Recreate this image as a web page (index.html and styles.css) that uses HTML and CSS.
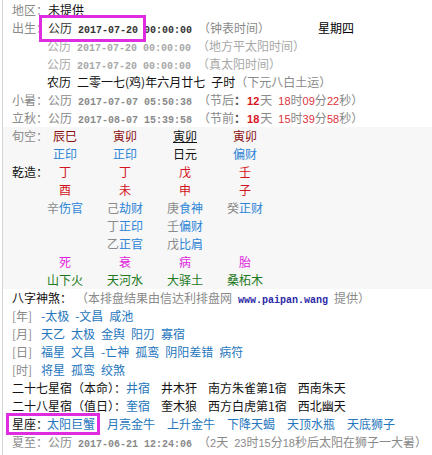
FILE: index.html
```html
<!DOCTYPE html>
<html lang="zh-CN">
<head>
<meta charset="utf-8">
<title>排盘</title>
<link rel="stylesheet" href="styles.css">
</head>
<body>
<div class="page">
  <div class="row"><span class="g lbl">地区：</span>未提供</div>
  <div class="row"><span class="g lbl">出生：</span><span class="dk">公历</span><span class="mono dk">&nbsp;2017-07-20&nbsp;00:00:00&nbsp;</span><span class="g">（钟表时间）</span><span class="week">星期四</span></div>
  <div class="row lt ind">公历<span class="mono">&nbsp;2017-07-20&nbsp;00:00:00&nbsp;</span>（地方平太阳时间）</div>
  <div class="row lt ind">公历<span class="mono">&nbsp;2017-07-20&nbsp;00:00:00&nbsp;</span>（真太阳时间）</div>
  <div class="row ind">农历<span class="sp"></span>二零一七(鸡)年六月廿七<span class="sp"></span>子时<span class="g">（下元八白土运）</span></div>
  <div class="row g"><span class="lbl">小暑：</span>公历<span class="mono">&nbsp;2017-07-07&nbsp;05:50:38&nbsp;</span>（节后<b class="colon">：</b><b class="rb">12</b>天<span class="sp"></span><span class="rn">18</span>时<span class="rn">09</span>分<span class="rn">22</span>秒）</div>
  <div class="row g"><span class="lbl">立秋：</span>公历<span class="mono">&nbsp;2017-08-07&nbsp;15:39:58&nbsp;</span>（节前<b class="colon">：</b><b class="rb">18</b>天<span class="sp"></span><span class="rn">15</span>时<span class="rn">39</span>分<span class="rn">58</span>秒）</div>

  <div class="tbl">
    <div class="trow"><span class="tl g">旬空：</span><div class="cells"><span class="dr">辰巳</span><span class="dr">寅卯</span><span class="ul">寅卯</span><span class="dr">寅卯</span></div></div>
    <div class="trow"><span class="tl"></span><div class="cells"><span class="bl">正印</span><span class="bl">正印</span><span>日元</span><span class="bl">偏财</span></div></div>
    <div class="trow"><span class="tl">乾造：</span><div class="cells"><span class="rd">丁</span><span class="rd">丁</span><span class="rd">戊</span><span class="rd">壬</span></div></div>
    <div class="trow"><span class="tl"></span><div class="cells"><span class="rd">酉</span><span class="rd">未</span><span class="rd">申</span><span class="rd">子</span></div></div>
    <div class="trow"><span class="tl"></span><div class="cells"><span><i class="g">辛</i><i class="bl">伤官</i></span><span><i class="g">己</i><i class="bl">劫财</i></span><span><i class="g">庚</i><i class="bl">食神</i></span><span><i class="g">癸</i><i class="bl">正财</i></span></div></div>
    <div class="trow"><span class="tl"></span><div class="cells"><span></span><span><i class="g">丁</i><i class="bl">正印</i></span><span><i class="g">壬</i><i class="bl">偏财</i></span><span></span></div></div>
    <div class="trow"><span class="tl"></span><div class="cells"><span></span><span><i class="g">乙</i><i class="bl">正官</i></span><span><i class="g">戊</i><i class="bl">比肩</i></span><span></span></div></div>
    <div class="trow"><span class="tl"></span><div class="cells"><span class="mg">死</span><span class="mg">衰</span><span class="mg">病</span><span class="mg">胎</span></div></div>
    <div class="trow"><span class="tl"></span><div class="cells"><span class="gn">山下火</span><span class="gn">天河水</span><span class="gn">大驿土</span><span class="gn">桑柘木</span></div></div>
  </div>

  <div class="row">八字神煞：<span class="g note">（本排盘结果由信达利排盘网<span class="sp"></span><span class="url">www.paipan.wang</span><span class="sp"></span>提供）</span></div>
  <div class="row ss"><span class="g sl">[年]</span><span class="items"><span>-太极</span><span>-文昌</span><span>咸池</span></span></div>
  <div class="row ss"><span class="g sl">[月]</span><span class="items"><span>天乙</span><span>太极</span><span>金舆</span><span>阳刃</span><span>寡宿</span></span></div>
  <div class="row ss"><span class="g sl">[日]</span><span class="items"><span>福星</span><span>文昌</span><span>-亡神</span><span>孤鸾</span><span>阴阳差错</span><span>病符</span></span></div>
  <div class="row ss"><span class="g sl">[时]</span><span class="items"><span>将星</span><span>孤鸾</span><span>绞煞</span></span></div>
  <div class="row xs">二十七星宿（本命）：<span class="bl2">井宿</span><span>井木犴</span><span>南方朱雀第1宿</span><span>西南朱天</span></div>
  <div class="row xs">二十八星宿（值日）：<span class="bl2">奎宿</span><span>奎木狼</span><span>西方白虎第1宿</span><span>西北幽天</span></div>
  <div class="row zodiac">星座：<span class="items"><span>太阳巨蟹</span><span>月亮金牛</span><span>上升金牛</span><span>下降天蝎</span><span>天顶水瓶</span><span>天底狮子</span></span></div>
  <div class="row g"><span class="lbl">夏至：</span>公历<span class="mono">&nbsp;2017-06-21&nbsp;12:24:06&nbsp;</span>（<span class="num">2</span>天<span class="sp"></span><span class="num">23</span>时<span class="num">15</span>分<span class="num">18</span>秒后太阳在狮子一大暑）</div>

  <div class="mark mark-birth"></div>
  <div class="mark mark-star"></div>
</div>
</body>
</html>
```
FILE: styles.css
```css
html, body {
  margin: 0;
  padding: 0;
  background: #ffffff;
}
body {
  font-family: "Noto Sans CJK SC", "Noto Sans", sans-serif;
  font-size: 12px;
  line-height: 18px;
  color: #111;
}
.page {
  position: relative;
  margin-left: 2px;
  border-left: 1px solid #d4d4d4;
  padding: 1px 0 0 9px;
  min-height: 454px;
}
.row {
  height: 18px;
  white-space: nowrap;
}
.lbl { display: inline-block; width: 36px; }
.ind { padding-left: 35px; }
.g { color: #8a8a8a; }
.lt { color: #a8a8a8; }
.dk { color: #333; }
.mono {
  font-family: "Liberation Mono", monospace;
  font-size: 10px;
  font-weight: bold;
}
.sp { display: inline-block; width: 6px; }
.week { margin-left: 48px; color: #000; }
.colon { font-weight: bold; color: #555; }
.rb {
  font-family: "Liberation Sans", sans-serif;
  font-size: 11px;
  font-weight: bold;
  color: #d8141c;
  margin: 0 1px;
}
.rn {
  font-family: "Liberation Sans", sans-serif;
  font-size: 11px;
  color: #e0303a;
}
.num {
  font-family: "Liberation Sans", sans-serif;
  font-size: 11px;
}

.tbl {
  background: #f7f7f7;
  margin-left: -9px;
  padding-left: 9px;
  margin-top: 0;
}
.trow {
  display: flex;
  height: 18px;
  white-space: nowrap;
}
.tl { width: 35px; flex: none; }
.cells {
  display: grid;
  grid-template-columns: repeat(4, 36px);
  column-gap: 24px;
}
.cells > span { text-align: center; white-space: nowrap; }
.cells i { font-style: normal; }
.dr { color: #8b0f0f; }
.ul { color: #111; text-decoration: underline; }
.bl { color: #2b84d6; }
.rd { color: #d31420; }
.mg { color: #e01ee0; }
.gn { color: #1c7a1c; }

.note { margin-left: 10px; }
.url {
  font-family: "Liberation Mono", monospace;
  font-size: 10px;
  font-weight: bold;
  color: #2a2aa8;
}
.ss { display: flex; }
.sl { width: 29px; flex: none; }
.items { display: inline-flex; gap: 6px; color: #2576bd; }
.xs > span { margin-left: 11px; }
.xs > span.bl2 { margin-left: 0; color: #2576bd; }
.zodiac { display: flex; }
.zodiac .items { gap: 12px; margin-left: -1px; }

.mark {
  position: absolute;
  border: 3px solid #e02ce0;
  box-sizing: border-box;
}
.mark-birth { left: 36px; top: 15px; width: 107px; height: 27px; }
.mark-star { left: 3px; top: 413px; width: 94px; height: 22px; }
```
